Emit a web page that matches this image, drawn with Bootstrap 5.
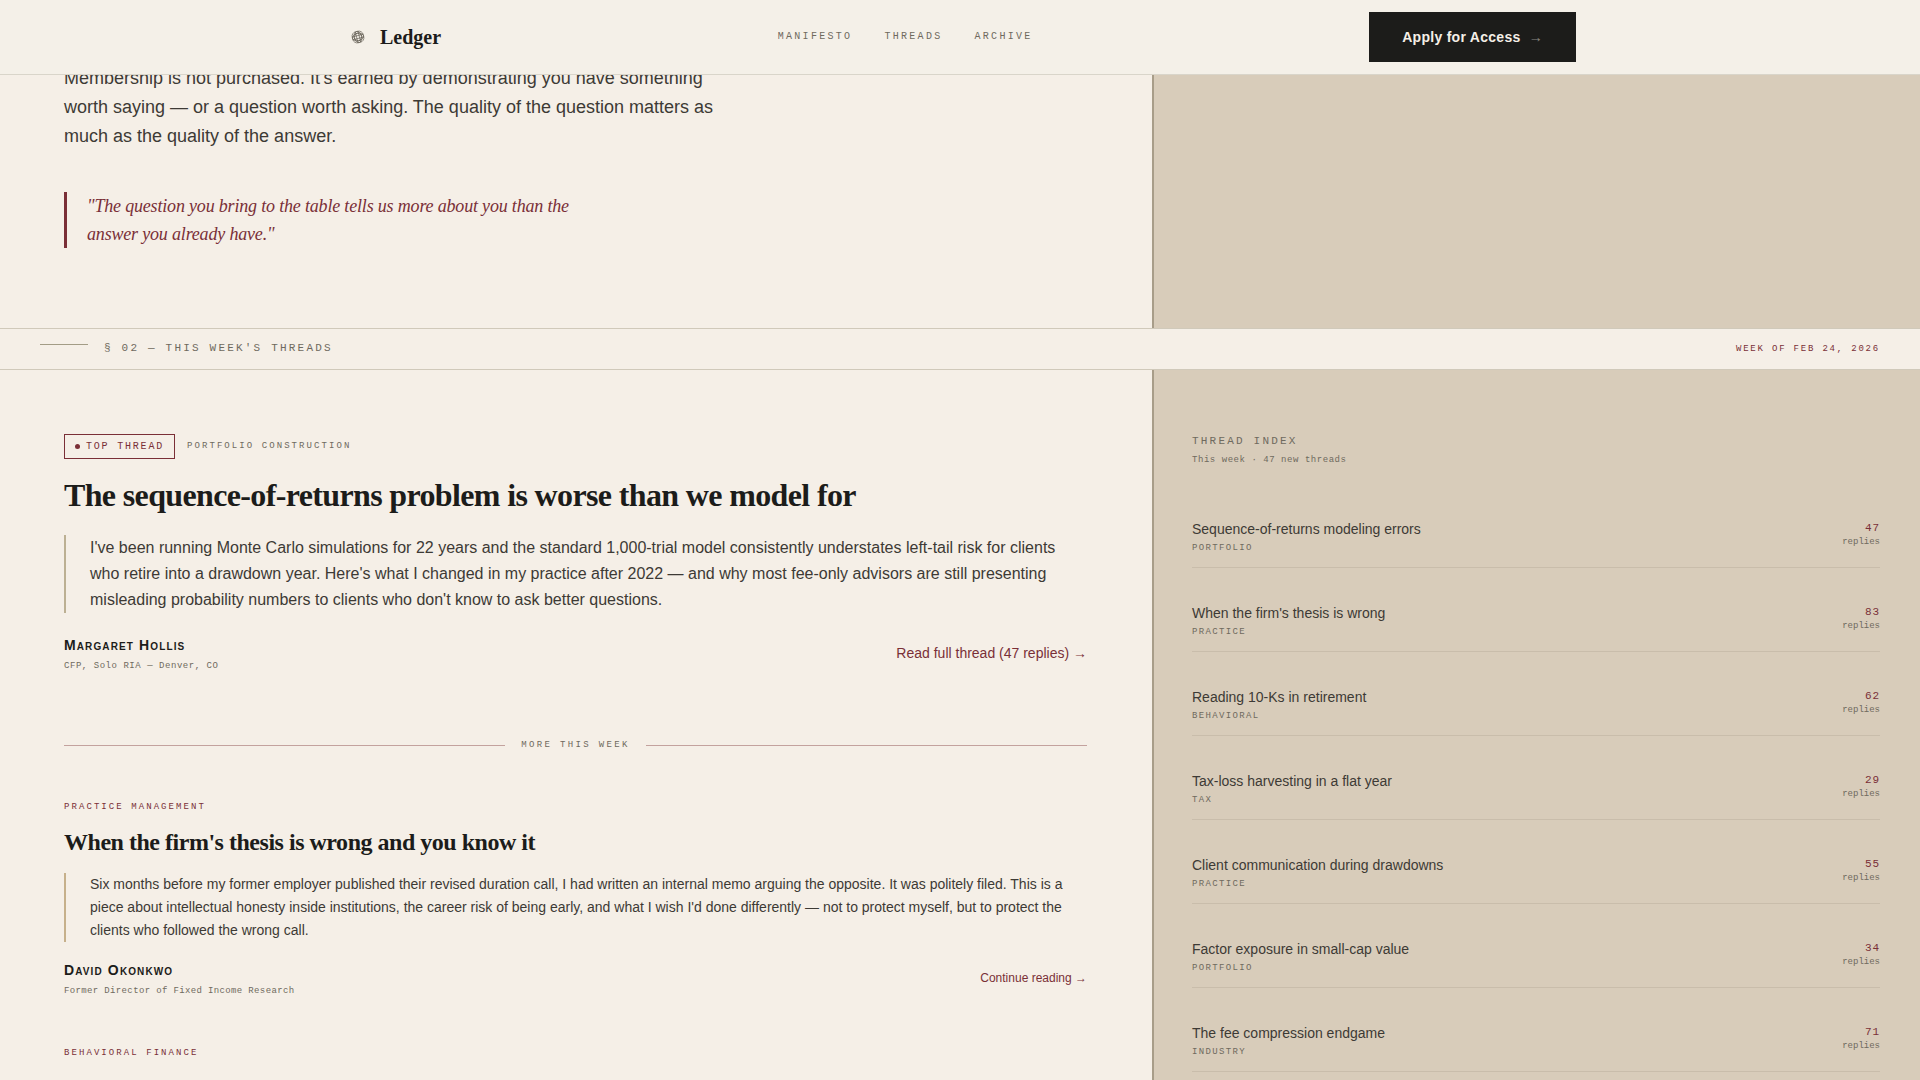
<!DOCTYPE html>
<html lang="en">
<head>
<meta charset="utf-8">
<meta name="viewport" content="width=device-width, initial-scale=1">
<title>Ledger</title>
<link rel="stylesheet" href="https://cdn.jsdelivr.net/npm/bootstrap@5.3.0/dist/css/bootstrap.min.css">
<style>
:root{--paper:#f5efe7;--tan:#d8ccba;--ink:#1c1c1a;--body:#3d3a35;--muted:#6f6a5e;--wine:#7a2f37;--line:#d0c9ba}
body{background:var(--paper);color:var(--body);font-family:"Liberation Sans",Arial,sans-serif}
a{text-decoration:none}
.mono{font-family:"Liberation Mono","Courier New",monospace}
.serif{font-family:"Liberation Serif","Times New Roman",serif}
.wine{color:var(--wine)}
.quiet{color:var(--muted)}
.site-nav{background:#f4f0e8;border-bottom:1px solid #d9d5ca;padding:12px 0}
.site-nav .shell{max-width:1280px;padding:0 24px}
.brand{font-size:20px;line-height:24px;font-weight:700;color:var(--ink);gap:8px}
.site-links{gap:32px}
.nav-item-link{font-size:10px;line-height:16px;letter-spacing:.23em;color:var(--muted)}
.apply{background:var(--ink);color:var(--paper);border:0;border-radius:0;font-size:14px;line-height:18px;font-weight:700;letter-spacing:.02em;padding:16px 33px}
.apply:hover{background:#333;color:var(--paper)}
.apply .arrow{opacity:.5;font-weight:400;margin-left:4px}
.main-col,.side-col{flex:0 0 auto;width:100%}
.side-col{background:var(--tan);border-left:2px solid #a89d89;padding:0 40px 64px 38px}
.main-col{padding:0 65px 0 64px}
@media(min-width:992px){.main-col{width:60%}.side-col{width:40%}}
.intro{padding-top:64px;padding-bottom:80px}
.intro p{font-size:18px;line-height:29px;max-width:660px;margin-bottom:41px}
.pull{border-left:3px solid var(--wine);padding-left:20px;font-size:18px;line-height:28px;font-style:italic;letter-spacing:-.01em;max-width:520px;margin:0}
.band{border:solid var(--line);border-width:1px 0;padding:12px 40px;line-height:16px}
.band-rule{width:48px;height:1px;background:#a39c86;margin-top:3px}
.eyebrow{font-size:11px;line-height:15px;letter-spacing:.2em}
.week{font-size:9px;line-height:16px;letter-spacing:.2em}
.threads{padding-top:64px;padding-bottom:64px}
.top-row{gap:12px}
.top-tag{border:1px solid var(--wine);padding:4px 10px;font-size:10px;line-height:15px;letter-spacing:.18em;gap:6px}
.dot{width:5px;height:5px;border-radius:50%;background:var(--wine)}
.topic{font-size:9px;line-height:15px;letter-spacing:.23em}
h2.headline{font-size:32px;line-height:40px;font-weight:700;letter-spacing:-.02em;color:var(--ink);margin:16px 0 20px}
h3.headline{font-size:24px;line-height:31px;font-weight:700;letter-spacing:-.02em;color:var(--ink);margin:12px 0 15px}
.excerpt{border-left:2px solid #bcb093;padding-left:24px;margin:0 0 24px;font-size:16px;line-height:26px}
.excerpt.minor{font-size:14px;line-height:23px;border-color:#c6b08b;margin-bottom:20px}
.person{font-size:14px;line-height:17px;font-weight:700;font-variant:small-caps;letter-spacing:.08em;color:var(--ink)}
.role{font-size:9px;line-height:12px;letter-spacing:.06em;margin-top:6px}
.role.minor{letter-spacing:.04em}
.more{margin:66px 0 47px;gap:16px;font-size:9px;line-height:15px;letter-spacing:.26em}
.more::before,.more::after{content:"";flex:1;height:1px;background:#c3a29e}
.read{font-size:14px;line-height:18px;padding-bottom:3px}
.read.minor{font-size:12px}
.next{margin-top:49px}
.index-head{margin-bottom:18px}
.index-note{font-size:9px;line-height:12px;letter-spacing:.06em;margin-top:5px}
.index-item{padding:35px 0 13px;border-bottom:1px solid #c9bdab}
.index-title{font-size:14px;line-height:20px;color:var(--body)}
.index-tag{font-size:9px;line-height:12px;letter-spacing:.15em;margin-top:3px}
.tally{padding-top:2px}
.count{font-size:11px;line-height:15px;letter-spacing:.08em}
.unit{font-size:9px;line-height:12px}
</style>
<script src="https://cdn.jsdelivr.net/npm/bootstrap@5.3.0/dist/js/bootstrap.bundle.min.js" defer></script>
</head>
<body>
<header class="site-nav fixed-top">
  <div class="shell mx-auto d-flex justify-content-between align-items-center">
    <a href="#" class="brand serif d-flex align-items-center">
      <svg width="28" height="28" viewBox="0 0 28 28" fill="none" stroke="#5d594e" stroke-width=".6" aria-hidden="true">
        <g transform="rotate(-14 14 14)">
          <rect x="8.3" y="8.3" width="11.4" height="11.4" rx="4.6"/>
          <ellipse cx="14" cy="14" rx="5.7" ry="3.8"/><ellipse cx="14" cy="14" rx="3.8" ry="5.7"/>
          <path d="M8.4 12.6h11.2M8.4 15.4h11.2M12.6 8.4v11.2M15.4 8.4v11.2"/>
          <rect x="10.6" y="10.6" width="6.8" height="6.8" rx="2" transform="rotate(45 14 14)"/>
        </g>
      </svg>
      <span>Ledger</span>
    </a>
    <nav class="site-links mono d-none d-md-flex">
      <a class="nav-item-link" href="#manifesto">MANIFESTO</a>
      <a class="nav-item-link" href="#threads">THREADS</a>
      <a class="nav-item-link" href="#archive">ARCHIVE</a>
    </nav>
    <button type="button" class="btn apply">Apply for Access <span class="arrow">→</span></button>
  </div>
</header>

<main>
  <section id="manifesto" class="d-flex flex-wrap">
    <div class="main-col intro">
      <p>Membership is not purchased. It's earned by demonstrating you have something worth saying — or a question worth asking. The quality of the question matters as much as the quality of the answer.</p>
      <blockquote class="pull serif wine">"The question you bring to the table tells us more about you than the answer you already have."</blockquote>
    </div>
    <div class="side-col"></div>
  </section>

  <div class="band mono d-flex justify-content-between">
    <div class="d-flex gap-3">
      <span class="band-rule"></span>
      <span class="eyebrow quiet">§ 02 — THIS WEEK'S THREADS</span>
    </div>
    <span class="week wine">WEEK OF FEB 24, 2026</span>
  </div>

  <section id="threads" class="d-flex flex-wrap">
    <div class="main-col threads">
      <article>
        <div class="top-row d-flex align-items-center mono">
          <span class="top-tag wine d-flex align-items-center"><span class="dot"></span>TOP THREAD</span>
          <span class="topic quiet">PORTFOLIO CONSTRUCTION</span>
        </div>
        <h2 class="headline serif">The sequence-of-returns problem is worse than we model for</h2>
        <blockquote class="excerpt">I've been running Monte Carlo simulations for 22 years and the standard 1,000-trial model consistently understates left-tail risk for clients who retire into a drawdown year. Here's what I changed in my practice after 2022 — and why most fee-only advisors are still presenting misleading probability numbers to clients who don't know to ask better questions.</blockquote>
        <footer class="d-flex justify-content-between align-items-center">
          <div>
            <div class="person">Margaret Hollis</div>
            <div class="role mono quiet">CFP, Solo RIA — Denver, CO</div>
          </div>
          <a href="#" class="read wine">Read full thread (47 replies) →</a>
        </footer>
      </article>

      <div class="more mono quiet d-flex align-items-center">MORE THIS WEEK</div>

      <article>
        <div class="topic mono wine">PRACTICE MANAGEMENT</div>
        <h3 class="headline serif">When the firm's thesis is wrong and you know it</h3>
        <blockquote class="excerpt minor">Six months before my former employer published their revised duration call, I had written an internal memo arguing the opposite. It was politely filed. This is a piece about intellectual honesty inside institutions, the career risk of being early, and what I wish I'd done differently — not to protect myself, but to protect the clients who followed the wrong call.</blockquote>
        <footer class="d-flex justify-content-between align-items-center">
          <div>
            <div class="person">David Okonkwo</div>
            <div class="role minor mono quiet">Former Director of Fixed Income Research</div>
          </div>
          <a href="#" class="read minor wine">Continue reading →</a>
        </footer>
      </article>

      <article class="next">
        <div class="topic mono wine">BEHAVIORAL FINANCE</div>
      </article>
    </div>

    <aside class="side-col threads">
      <div class="index-head mono quiet">
        <div class="eyebrow">THREAD INDEX</div>
        <div class="index-note">This week · 47 new threads</div>
      </div>
      <ul class="list-unstyled m-0">
        <li class="index-item d-flex justify-content-between">
          <div><a href="#" class="index-title d-block">Sequence-of-returns modeling errors</a><div class="index-tag mono quiet">PORTFOLIO</div></div>
          <div class="tally mono text-end"><div class="count wine">47</div><div class="unit quiet">replies</div></div>
        </li>
        <li class="index-item d-flex justify-content-between">
          <div><a href="#" class="index-title d-block">When the firm's thesis is wrong</a><div class="index-tag mono quiet">PRACTICE</div></div>
          <div class="tally mono text-end"><div class="count wine">83</div><div class="unit quiet">replies</div></div>
        </li>
        <li class="index-item d-flex justify-content-between">
          <div><a href="#" class="index-title d-block">Reading 10-Ks in retirement</a><div class="index-tag mono quiet">BEHAVIORAL</div></div>
          <div class="tally mono text-end"><div class="count wine">62</div><div class="unit quiet">replies</div></div>
        </li>
        <li class="index-item d-flex justify-content-between">
          <div><a href="#" class="index-title d-block">Tax-loss harvesting in a flat year</a><div class="index-tag mono quiet">TAX</div></div>
          <div class="tally mono text-end"><div class="count wine">29</div><div class="unit quiet">replies</div></div>
        </li>
        <li class="index-item d-flex justify-content-between">
          <div><a href="#" class="index-title d-block">Client communication during drawdowns</a><div class="index-tag mono quiet">PRACTICE</div></div>
          <div class="tally mono text-end"><div class="count wine">55</div><div class="unit quiet">replies</div></div>
        </li>
        <li class="index-item d-flex justify-content-between">
          <div><a href="#" class="index-title d-block">Factor exposure in small-cap value</a><div class="index-tag mono quiet">PORTFOLIO</div></div>
          <div class="tally mono text-end"><div class="count wine">34</div><div class="unit quiet">replies</div></div>
        </li>
        <li class="index-item d-flex justify-content-between">
          <div><a href="#" class="index-title d-block">The fee compression endgame</a><div class="index-tag mono quiet">INDUSTRY</div></div>
          <div class="tally mono text-end"><div class="count wine">71</div><div class="unit quiet">replies</div></div>
        </li>
      </ul>
    </aside>
  </section>
</main>
</body>
</html>
